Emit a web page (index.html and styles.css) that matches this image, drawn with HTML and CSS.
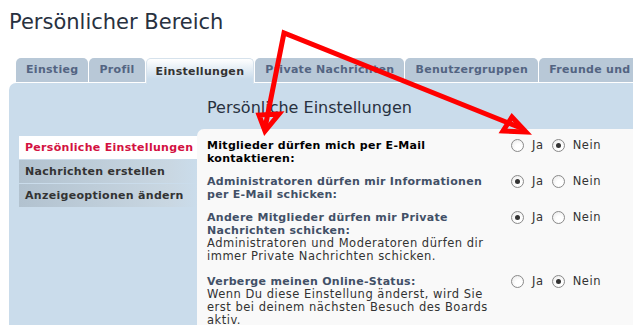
FILE: index.html
```html
<!DOCTYPE html>
<html lang="de">
<head>
<meta charset="utf-8">
<title>Persönlicher Bereich</title>
<link rel="stylesheet" href="styles.css">
</head>
<body>
<div class="page">
  <h1 class="title">Persönlicher Bereich</h1>
  <ul class="tabs">
    <li class="tab">Einstieg</li>
    <li class="tab">Profil</li>
    <li class="tab active">Einstellungen</li>
    <li class="tab">Private Nachrichten</li>
    <li class="tab">Benutzergruppen</li>
    <li class="tab">Freunde und Feinde</li>
  </ul>
  <div class="panel">
    <h2 class="panel-title">Persönliche Einstellungen</h2>
    <div class="panel-body">
      <ul class="menu">
        <li class="menu-item current">Persönliche Einstellungen</li>
        <li class="menu-item">Nachrichten erstellen</li>
        <li class="menu-item">Anzeigeoptionen ändern</li>
      </ul>
      <div class="content">
        <dl class="row">
          <dt class="label focus">Mitglieder dürfen mich per E-Mail kontaktieren:</dt>
          <dd class="choices">
            <label class="choice"><span class="radio"></span>Ja</label>
            <label class="choice"><span class="radio on"></span>Nein</label>
          </dd>
        </dl>
        <dl class="row">
          <dt class="label">Administratoren dürfen mir Informationen per E-Mail schicken:</dt>
          <dd class="choices">
            <label class="choice"><span class="radio on"></span>Ja</label>
            <label class="choice"><span class="radio"></span>Nein</label>
          </dd>
        </dl>
        <dl class="row">
          <dt class="label">Andere Mitglieder dürfen mir Private Nachrichten schicken:<span class="desc">Administratoren und Moderatoren dürfen dir immer Private Nachrichten schicken.</span></dt>
          <dd class="choices">
            <label class="choice"><span class="radio on"></span>Ja</label>
            <label class="choice"><span class="radio"></span>Nein</label>
          </dd>
        </dl>
        <dl class="row">
          <dt class="label">Verberge meinen Online-Status:<span class="desc">Wenn Du diese Einstellung änderst, wird Sie erst bei deinem nächsten Besuch des Boards aktiv.</span></dt>
          <dd class="choices">
            <label class="choice"><span class="radio"></span>Ja</label>
            <label class="choice"><span class="radio on"></span>Nein</label>
          </dd>
        </dl>
      </div>
    </div>
  </div>
</div>
<svg class="arrows" width="633" height="325" viewBox="0 0 633 325">
  <g stroke="#ff0000" stroke-width="5" fill="none" stroke-linejoin="miter" stroke-linecap="round">
    <path d="M265 128 L284 33 L521 128"/>
    <path d="M259 115 L265 131 L279 114 Z"/>
    <path d="M503 131 L526 132 L512 117 Z"/>
  </g>
</svg>
</body>
</html>
```

FILE: styles.css
```css
html, body {
  margin: 0;
  padding: 0;
  overflow: hidden;
  background: #ffffff;
}
body {
  font-family: "DejaVu Sans", Verdana, sans-serif;
  color: #333333;
  width: 633px;
  height: 325px;
  position: relative;
}
.page {
  padding-left: 9px;
}
.title {
  margin: 0;
  padding-top: 9px;
  font-size: 21px;
  line-height: 26px;
  font-weight: normal;
  color: #28313f;
  height: 26px;
}
.tabs {
  list-style: none;
  margin: 23px 0 0 7px;
  padding: 0;
  display: flex;
  align-items: flex-end;
  height: 25px;
  white-space: nowrap;
}
.tab {
  flex-shrink: 0;
  height: 24px;
  line-height: 24px;
  padding: 0 10px;
  margin-right: 1px;
  background: #b8c8d7;
  color: #536482;
  font-size: 11px;
  font-weight: bold;
  letter-spacing: 0.3px;
  border-radius: 5px 5px 0 0;
  border-bottom: 1px solid #ffffff;
}
.tab.active {
  height: 25px;
  line-height: 26px;
  border: 1px solid #d6e2ec;
  border-bottom: none;
  background: linear-gradient(#ffffff, #cadceb 80%);
  color: #333333;
  padding: 0 9px;
  margin: 0 1px -1px 0;
  position: relative;
  z-index: 1;
}
.panel {
  background: #cadceb;
  border-radius: 7px 0 0 0;
  height: 260px;
}
.panel-title {
  margin: 0;
  padding: 15px 0 0 198px;
  font-size: 16px;
  line-height: 20px;
  font-weight: normal;
  color: #28313f;
  height: 31px;
}
.panel-body {
  display: flex;
  align-items: flex-start;
  padding-left: 10px;
}
.menu {
  list-style: none;
  margin: 7px 0 0;
  padding: 0;
  width: 178px;
  flex-shrink: 0;
}
.menu-item {
  height: 23px;
  line-height: 23px;
  margin-bottom: 1px;
  padding-left: 6px;
  font-size: 11px;
  font-weight: bold;
  letter-spacing: 0.3px;
  color: #333333;
  background: linear-gradient(to right, #b2c2cf, #c9d7e2 85%, #cadceb);
}
.menu-item.current {
  background: #ffffff;
  color: #d31141;
}
.content {
  flex: 1;
  background: #f9f9f9;
  border-radius: 7px 0 0 0;
  padding: 10px 0 0 10px;
  height: 220px;
}
.row {
  display: flex;
  margin: 0 0 10px;
}
.label {
  width: 294px;
  flex-shrink: 0;
  font-size: 11px;
  line-height: 13px;
  font-weight: bold;
  letter-spacing: 0.3px;
  color: #425067;
}
.label.focus {
  color: #000000;
}
.desc {
  display: block;
  font-weight: normal;
  font-size: 11.5px;
  letter-spacing: 0.5px;
  color: #333333;
  margin-bottom: 2px;
}
.choices {
  margin: 0 0 0 10px;
  display: flex;
  font-size: 11.5px;
  letter-spacing: 0.6px;
  line-height: 13px;
  color: #333333;
}
.choice {
  display: flex;
  align-items: center;
  margin-right: 8px;
  height: 13px;
}
.radio {
  width: 11px;
  height: 11px;
  border: 1px solid #8a8a8a;
  border-radius: 50%;
  background: radial-gradient(circle at 60% 65%, #ffffff 30%, #e6e6e6 100%);
  margin-right: 8px;
  position: relative;
  flex-shrink: 0;
}
.radio.on::after {
  content: "";
  position: absolute;
  left: 3px;
  top: 3px;
  width: 5px;
  height: 5px;
  border-radius: 50%;
  background: #333333;
}
.arrows {
  position: absolute;
  left: 0;
  top: 0;
  pointer-events: none;
}
```
